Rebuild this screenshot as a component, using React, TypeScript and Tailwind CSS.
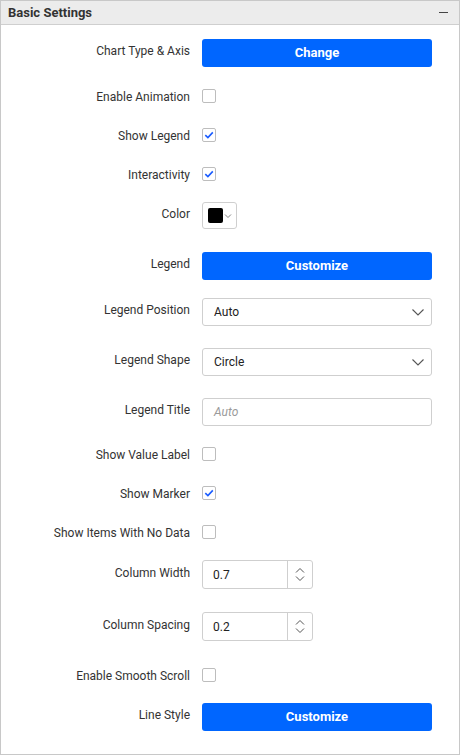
import React from "react";

const font = { fontFamily: "Roboto, 'Liberation Sans', sans-serif" };

function Chevron({ size = 14 }: { size?: number }) {
    return (
        <svg width={size} height={size} viewBox="0 0 14 14" fill="none">
            <path d="M1.5 4.5 L7 10 L12.5 4.5" stroke="#555" strokeWidth="1.1" />
        </svg>
    );
}

function Checkbox({ checked }: { checked?: boolean }) {
    return (
        <div className="w-[14px] h-[14px] border border-[#bdbdbd] rounded-[2px] bg-white flex items-center justify-center">
            {checked && (
                <svg width="10" height="10" viewBox="0 0 10 10" fill="none">
                    <path d="M1.3 5.2 L3.9 7.6 L8.8 2.4" stroke="#1a5cff" strokeWidth="1.6" />
                </svg>
            )}
        </div>
    );
}

function BlueButton({ children }: { children: React.ReactNode }) {
    return (
        <div className="w-[230px] h-[28px] rounded-[3px] bg-[#0066ff] text-white text-[13px] font-bold flex items-center justify-center">{children}</div>
    );
}

function Select({ value }: { value: string }) {
    return (
        <div className="w-[230px] h-[28px] rounded-[3px] border border-[#cfcfcf] bg-white flex items-center justify-between pl-[11px] pr-[6px] text-[12px] text-[#222]">
            <span>{value}</span>
            <Chevron />
        </div>
    );
}

function Numeric({ value }: { value: string }) {
    return (
        <div className="w-[111px] h-[29px] rounded-[3px] border border-[#cfcfcf] bg-white flex text-[12px] text-[#222]">
            <div className="flex-1 flex items-center pl-[10px]">{value}</div>
            <div className="w-[25px] border-l border-[#cfcfcf] flex flex-col items-center justify-center gap-[3px]">
                <svg width="10" height="6" viewBox="0 0 10 6" fill="none"><path d="M1 5.5 L5 1.5 L9 5.5" stroke="#555" strokeWidth="1" /></svg>
                <svg width="10" height="6" viewBox="0 0 10 6" fill="none"><path d="M1 0.5 L5 4.5 L9 0.5" stroke="#555" strokeWidth="1" /></svg>
            </div>
        </div>
    );
}

// mt = gap above the control, box = checkbox row (row as tall as the box, label sits a bit lower)
function Row({ label, mt, box, children }: { label: string; mt: string; box?: boolean; children: React.ReactNode }) {
    return (
        <div className={`flex items-center ${mt} ${box ? "h-[14px]" : ""}`}>
            <div className={`w-[189px] shrink-0 text-right text-[12px] text-[#333] ${box ? "mt-[2px]" : "mb-[4px]"}`}>{label}</div>
            <div className="ml-[12px] flex items-center">{children}</div>
        </div>
    );
}

export default function App() {
    return (
        <div className="w-[460px] h-[755px] bg-white border border-[#c8c8c8] flex flex-col" style={font}>
            <div className="h-[24px] shrink-0 bg-[#ececec] border-b border-[#cfcfcf] flex items-center justify-between pl-[7px] pr-[11px]">
                <span className="text-[13px] font-bold text-[#333]">Basic Settings</span>
                <div className="w-[9px] h-[1.5px] bg-[#444]" />
            </div>

            <div className="flex flex-col">
                <Row label="Chart Type & Axis" mt="mt-[14px]"><BlueButton>Change</BlueButton></Row>
                <Row label="Enable Animation" mt="mt-[22px]" box><Checkbox /></Row>
                <Row label="Show Legend" mt="mt-[25px]" box><Checkbox checked /></Row>
                <Row label="Interactivity" mt="mt-[25px]" box><Checkbox checked /></Row>
                <Row label="Color" mt="mt-[21px]">
                    <div className="w-[35px] h-[27px] border border-[#cfcfcf] rounded-[3px] bg-white flex items-center pl-[5px] gap-[1px]">
                        <div className="w-[15px] h-[15px] bg-black rounded-[2px]" />
                        <svg width="8" height="8" viewBox="0 0 8 8" fill="none"><path d="M1 2.5 L4 5.5 L7 2.5" stroke="#777" strokeWidth="0.9" /></svg>
                    </div>
                </Row>
                <Row label="Legend" mt="mt-[23px]"><BlueButton>Customize</BlueButton></Row>
                <Row label="Legend Position" mt="mt-[18px]"><Select value="Auto" /></Row>
                <Row label="Legend Shape" mt="mt-[22px]"><Select value="Circle" /></Row>
                <Row label="Legend Title" mt="mt-[22px]">
                    <div className="w-[230px] h-[28px] rounded-[3px] border border-[#cfcfcf] bg-white flex items-center pl-[11px] text-[12px] italic text-[#9a9a9a]">Auto</div>
                </Row>
                <Row label="Show Value Label" mt="mt-[21px]" box><Checkbox /></Row>
                <Row label="Show Marker" mt="mt-[25px]" box><Checkbox checked /></Row>
                <Row label="Show Items With No Data" mt="mt-[25px]" box><Checkbox /></Row>
                <Row label="Column Width" mt="mt-[21px]"><Numeric value="0.7" /></Row>
                <Row label="Column Spacing" mt="mt-[23px]"><Numeric value="0.2" /></Row>
                <Row label="Enable Smooth Scroll" mt="mt-[27px]" box><Checkbox /></Row>
                <Row label="Line Style" mt="mt-[21px]"><BlueButton>Customize</BlueButton></Row>
            </div>
        </div>
    );
}
